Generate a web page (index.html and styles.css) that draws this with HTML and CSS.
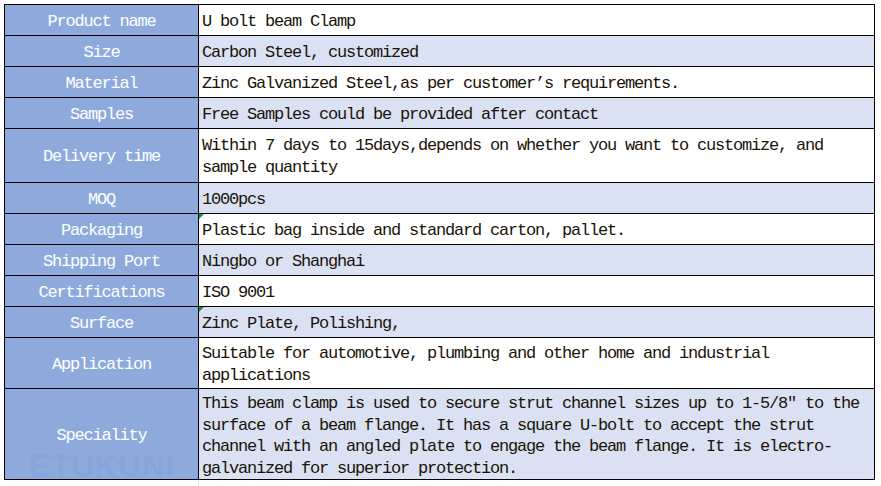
FILE: index.html
```html
<!DOCTYPE html>
<html>
<head>
<meta charset="utf-8">
<link rel="stylesheet" href="styles.css">
</head>
<body>
<table class="spec">
  <colgroup><col class="c-label"><col class="c-value"></colgroup>
  <tr class="odd"><td class="label">Product name</td><td class="value">U bolt beam Clamp</td></tr>
  <tr class="even"><td class="label">Size</td><td class="value">Carbon Steel, customized</td></tr>
  <tr class="odd"><td class="label">Material</td><td class="value">Zinc Galvanized Steel,as per customer’s requirements.</td></tr>
  <tr class="even"><td class="label">Samples</td><td class="value">Free Samples could be provided after contact</td></tr>
  <tr class="odd tall"><td class="label">Delivery time</td><td class="value">Within 7 days to 15days,depends on whether you want to customize, and sample quantity</td></tr>
  <tr class="even"><td class="label">MOQ</td><td class="value">1000pcs</td></tr>
  <tr class="odd"><td class="label">Packaging</td><td class="value flag">Plastic bag inside and standard carton, pallet.</td></tr>
  <tr class="even"><td class="label">Shipping Port</td><td class="value">Ningbo or Shanghai</td></tr>
  <tr class="odd"><td class="label">Certifications</td><td class="value">ISO 9001</td></tr>
  <tr class="even"><td class="label">Surface</td><td class="value flag">Zinc Plate, Polishing,</td></tr>
  <tr class="odd app"><td class="label">Application</td><td class="value">Suitable for automotive, plumbing and other home and industrial applications</td></tr>
  <tr class="even last"><td class="label mark">Speciality<span class="watermark">ETUKUNI</span></td><td class="value">This beam clamp is used to secure strut channel sizes up to 1-5/8″ to the surface of a beam flange. It has a square U-bolt to accept the strut channel with an angled plate to engage the beam flange. It is electro-galvanized for superior protection.</td></tr>
</table>
</body>
</html>
```

FILE: styles.css
```css
html, body {
  margin: 0;
  padding: 0;
  background: #ffffff;
}
body {
  background-image: linear-gradient(to right, transparent 198px, #e2e2e2 198px, #e2e2e2 199px, transparent 199px);
  min-height: 486px;
}
.spec {
  margin: 4px 0 0 4px;
  border-collapse: collapse;
  table-layout: fixed;
  width: 871px;
  font-family: "Liberation Mono", "Noto Sans CJK SC", monospace;
  font-size: 17px;
  letter-spacing: -1.2px;
  line-height: 22px;
  background: #fff;
}
.c-label { width: 194px; }
.spec td {
  border: 1px solid #000;
  height: 27px;
  padding: 3px 3px 0;
  vertical-align: middle;
  position: relative;
}
.spec .label {
  background: #8eaadc;
  color: #ffffff;
  text-align: center;
  overflow: hidden;
}
.spec .value {
  color: #1a1408;
  text-align: left;
}
.odd .value { background: #ffffff; }
.even .value { background: #d9e1f2; }
.tall td { height: 50px; }
.app td { height: 47px; }
.last td {
  height: 86px;
  padding-top: 4px;
  line-height: 21.5px;
}
.flag::before {
  content: "";
  position: absolute;
  left: 0;
  top: 0;
  border-top: 5px solid #1f8f3a;
  border-right: 5px solid transparent;
}
.watermark {
  position: absolute;
  left: 24px;
  bottom: 0;
  font-family: "Liberation Sans", sans-serif;
  font-weight: bold;
  font-size: 32px;
  letter-spacing: 0.5px;
  line-height: 26px;
  color: #87a5dc;
  pointer-events: none;
}
```
